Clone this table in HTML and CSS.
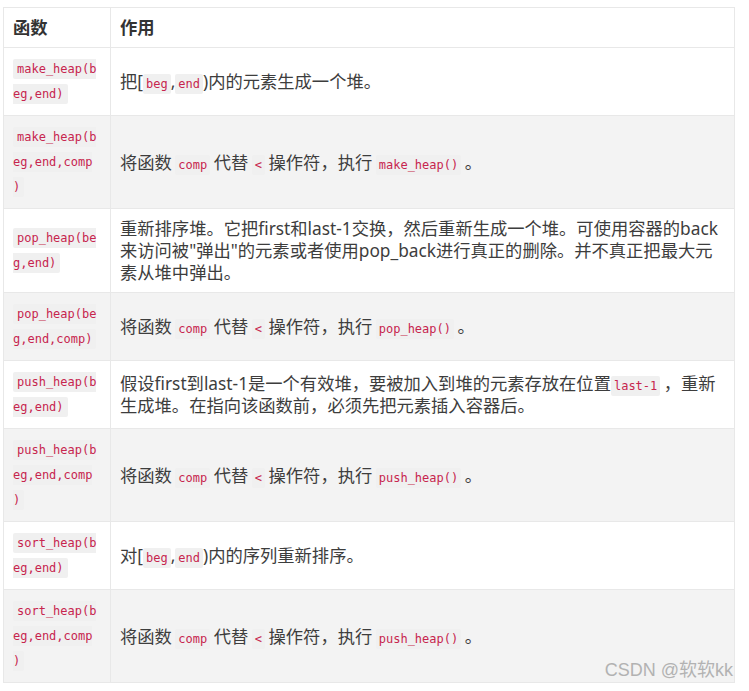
FILE: index.html
```html
<!DOCTYPE html>
<html lang="zh-CN">
<head>
<meta charset="utf-8">
<title>heap functions</title>
<link rel="stylesheet" href="styles.css">
</head>
<body>
<div class="page">
<table class="tbl">
  <thead>
    <tr><th class="c1">函数</th><th class="c2">作用</th></tr>
  </thead>
  <tbody>
    <tr>
      <td class="c1"><code>make_heap(beg,end)</code></td>
      <td class="c2">把[<code>beg</code>,<code>end</code>)内的元素生成一个堆。</td>
    </tr>
    <tr>
      <td class="c1"><code>make_heap(beg,end,comp)</code></td>
      <td class="c2">将函数 <code>comp</code> 代替 <code>&lt;</code> 操作符，执行 <code>make_heap()</code> 。</td>
    </tr>
    <tr>
      <td class="c1"><code>pop_heap(beg,end)</code></td>
      <td class="c2">重新排序堆。它把first和last-1交换，然后重新生成一个堆。可使用容器的back来访问被"弹出"的元素或者使用pop_back进行真正的删除。并不真正把最大元素从堆中弹出。</td>
    </tr>
    <tr>
      <td class="c1"><code>pop_heap(beg,end,comp)</code></td>
      <td class="c2">将函数 <code>comp</code> 代替 <code>&lt;</code> 操作符，执行 <code>pop_heap()</code> 。</td>
    </tr>
    <tr>
      <td class="c1"><code>push_heap(beg,end)</code></td>
      <td class="c2">假设first到last-1是一个有效堆，要被加入到堆的元素存放在位置<code>last-1</code> ，重新生成堆。在指向该函数前，必须先把元素插入容器后。</td>
    </tr>
    <tr>
      <td class="c1"><code>push_heap(beg,end,comp)</code></td>
      <td class="c2">将函数 <code>comp</code> 代替 <code>&lt;</code> 操作符，执行 <code>push_heap()</code> 。</td>
    </tr>
    <tr>
      <td class="c1"><code>sort_heap(beg,end)</code></td>
      <td class="c2">对[<code>beg</code>,<code>end</code>)内的序列重新排序。</td>
    </tr>
    <tr>
      <td class="c1"><code>sort_heap(beg,end,comp)</code></td>
      <td class="c2">将函数 <code>comp</code> 代替 <code>&lt;</code> 操作符，执行 <code>push_heap()</code> 。</td>
    </tr>
  </tbody>
</table>
<div class="watermark">CSDN @软软kk</div>
</div>
</body>
</html>
```
FILE: styles.css
```css
html, body {
  margin: 0;
  padding: 0;
  background: #ffffff;
}

.page {
  position: relative;
  width: 749px;
  height: 691px;
  overflow: hidden;
  padding: 7px 0 0 3px;
  box-sizing: border-box;
  font-family: "Noto Sans", "Noto Sans CJK SC", sans-serif;
  font-size: 17.3px;
  color: #3d3d3d;
}

.tbl {
  width: 732px;
  table-layout: fixed;
  border-collapse: separate;
  border-spacing: 0;
  border-top: 1px solid #e8e8e8;
  border-left: 1px solid #e8e8e8;
}

.tbl th,
.tbl td {
  border-right: 1px solid #e8e8e8;
  border-bottom: 1px solid #e8e8e8;
  padding: 9px 9px 8px 9px;
  line-height: 22px;
  text-align: left;
  vertical-align: middle;
}

.tbl th {
  font-weight: bold;
  color: #333333;
}

.tbl .c1 {
  width: 85px;
  padding-right: 12px;
}

.tbl td.c1 {
  font-family: "DejaVu Sans Mono", "Liberation Mono", monospace;
  font-size: 12px;
  line-height: 25px;
  overflow-wrap: anywhere;
}

.tbl td.c2 {
  word-spacing: -1px;
}

.tbl tbody tr:nth-child(even) {
  background: #f3f3f3;
}

code {
  font-family: "DejaVu Sans Mono", "Liberation Mono", monospace;
  font-size: 12px;
  line-height: 1;
  color: #c7254e;
  background: #f0f0f0;
  padding: 3px 4px;
  border-radius: 2px;
  word-spacing: 0;
}

.tbl td.c2 code {
  padding: 3px 3px;
}

.watermark {
  position: absolute;
  right: 16px;
  top: 658px;
  font-family: "Liberation Sans", "Noto Sans CJK SC", sans-serif;
  font-size: 18px;
  color: #b2b2b2;
  line-height: 24px;
}
```
